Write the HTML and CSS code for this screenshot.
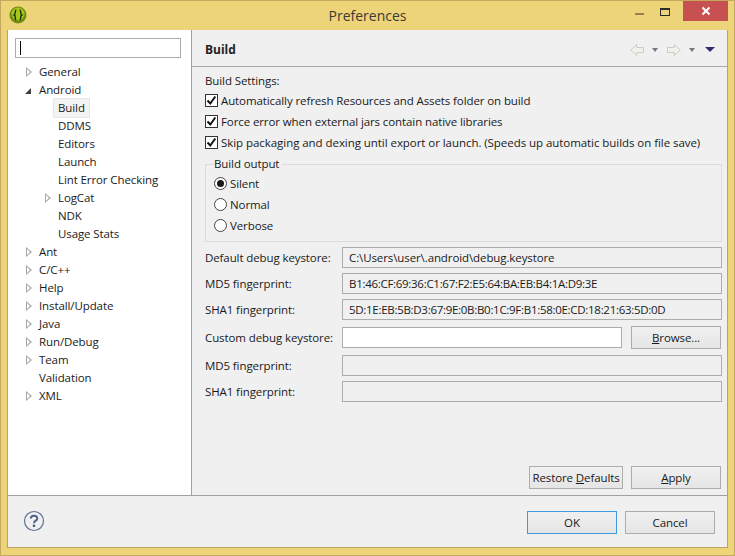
FILE: index.html
```html
<!DOCTYPE html>
<html lang="en">
<head>
<meta charset="utf-8">
<title>Preferences</title>
<link rel="stylesheet" href="styles.css">
</head>
<body>
<div class="window">
  <header class="titlebar">
    <svg class="app-icon" width="18" height="18" viewBox="0 0 18 18"><circle cx="9" cy="9" r="8.500" fill="#6f8c10"/><circle cx="9" cy="8" r="6.500" fill="#a6c81c"/><path d="M7.300 4C5.600 4 7 8.300 5.300 9 7 9.700 5.600 14 7.300 14M10.700 4C12.400 4 11 8.300 12.700 9 11 9.700 12.400 14 10.700 14" fill="none" stroke="#1d2a08" stroke-width="1.400"/></svg>
    <div class="title">Preferences</div>
    <div class="win-controls">
      <span class="win-btn"><i class="min-glyph"></i></span>
      <span class="win-btn"><i class="max-glyph"></i></span>
      <span class="win-close"><svg width="10" height="10" viewBox="0 0 10 10"><path d="M1.500 1.500l7 7M8.500 1.500l-7 7" stroke="#fff" stroke-width="2"/></svg></span>
    </div>
  </header>
  <div class="client">
    <div class="main">
      <aside class="sidebar">
        <div class="filter"><i class="caret"></i></div>
        <ul class="tree">
          <li class="node"><i class="tw"></i>General</li>
          <li class="node"><i class="tw open"></i>Android</li>
          <li class="node sub"><span class="selected">Build</span></li>
          <li class="node sub">DDMS</li>
          <li class="node sub">Editors</li>
          <li class="node sub">Launch</li>
          <li class="node sub">Lint Error Checking</li>
          <li class="node sub has"><i class="tw"></i>LogCat</li>
          <li class="node sub">NDK</li>
          <li class="node sub">Usage Stats</li>
          <li class="node"><i class="tw"></i>Ant</li>
          <li class="node"><i class="tw"></i>C/C++</li>
          <li class="node"><i class="tw"></i>Help</li>
          <li class="node"><i class="tw"></i>Install/Update</li>
          <li class="node"><i class="tw"></i>Java</li>
          <li class="node"><i class="tw"></i>Run/Debug</li>
          <li class="node"><i class="tw"></i>Team</li>
          <li class="node">Validation</li>
          <li class="node"><i class="tw"></i>XML</li>
        </ul>
      </aside>
      <section class="page">
        <div class="page-head">
          <h1 class="page-title">Build</h1>
          <div class="nav">
            <svg width="14" height="14" viewBox="0 0 14 14"><path d="M.7 7l6-5.500V4.500h6.800v5H6.700v3z" fill="#f1f1ea" stroke="#c9cdc4"/></svg>
            <i class="drop"></i>
            <svg class="nav-fwd" width="14" height="14" viewBox="0 0 14 14"><path d="M13.300 7l-6-5.500V4.500H.5v5h6.800v3z" fill="#f1f1ea" stroke="#c9cdc4"/></svg>
            <i class="drop"></i>
            <i class="drop menu"></i>
          </div>
        </div>
        <div class="page-body">
          <div class="section-label">Build Settings:</div>
          <label class="check"><i class="box"><svg width="11" height="11" viewBox="0 0 11 11"><path d="M1.500 5.500l2.800 3 5-7" fill="none" stroke="#111" stroke-width="2"/></svg></i>Automatically refresh Resources and Assets folder on build</label>
          <label class="check"><i class="box"><svg width="11" height="11" viewBox="0 0 11 11"><path d="M1.500 5.500l2.800 3 5-7" fill="none" stroke="#111" stroke-width="2"/></svg></i>Force error when external jars contain native libraries</label>
          <label class="check long"><i class="box"><svg width="11" height="11" viewBox="0 0 11 11"><path d="M1.500 5.500l2.800 3 5-7" fill="none" stroke="#111" stroke-width="2"/></svg></i>Skip packaging and dexing until export or launch. (Speeds up automatic builds on file save)</label>
          <fieldset class="group">
            <legend class="group-label">Build output</legend>
            <label class="radio"><i class="dot on"></i>Silent</label>
            <label class="radio"><i class="dot"></i>Normal</label>
            <label class="radio"><i class="dot"></i>Verbose</label>
          </fieldset>
          <div class="form">
            <div class="row"><span class="row-label">Default debug keystore:</span><div class="field">C:\Users\user\.android\debug.keystore</div></div>
            <div class="row"><span class="row-label">MD5 fingerprint:</span><div class="field hash">B1:46:CF:69:36:C1:67:F2:E5:64:BA:EB:B4:1A:D9:3E</div></div>
            <div class="row"><span class="row-label">SHA1 fingerprint:</span><div class="field hash">5D:1E:EB:5B:D3:67:9E:0B:B0:1C:9F:B1:58:0E:CD:18:21:63:5D:0D</div></div>
            <div class="row custom"><span class="row-label">Custom debug keystore:</span><div class="field input"></div><button class="btn browse"><u>B</u>rowse...</button></div>
            <div class="row"><span class="row-label">MD5 fingerprint:</span><div class="field"></div></div>
            <div class="row"><span class="row-label">SHA1 fingerprint:</span><div class="field"></div></div>
          </div>
          <div class="page-actions">
            <button class="btn restore">Restore <u>D</u>efaults</button>
            <button class="btn"><u>A</u>pply</button>
          </div>
        </div>
      </section>
    </div>
    <footer class="footer">
      <svg class="help" width="22" height="22" viewBox="0 0 22 22"><circle cx="11" cy="11" r="9.500" fill="none" stroke="#5f7391" stroke-width="1.200"/><path d="M7.800 8.600C7.800 4.800 14.300 4.800 14.300 8.400 14.300 10.800 11 10.600 11 13.200" fill="none" stroke="#4d628a" stroke-width="2"/><rect x="9.800" y="14.600" width="2.400" height="2.400" fill="#4d628a"/></svg>
      <div class="footer-actions">
        <button class="btn default">OK</button>
        <button class="btn">Cancel</button>
      </div>
    </footer>
  </div>
</div>
</body>
</html>
```
FILE: styles.css
```css
* { box-sizing: border-box; }
html, body { margin: 0; padding: 0; }
body {
  width: 735px;
  height: 556px;
  overflow: hidden;
  font-family: "Open Sans", "Noto Sans", sans-serif;
  font-size: 11.5px;
  letter-spacing: -0.1px;
  color: #1a1a1a;
}
.window {
  width: 735px;
  height: 556px;
  display: flex;
  flex-direction: column;
  background: #edd478;
  border: 1px solid #c4a95e;
}
.titlebar {
  height: 29px;
  flex: none;
  display: flex;
  align-items: flex-start;
  position: relative;
}
.app-icon { margin: 5px 0 0 8px; }
.title {
  position: absolute;
  left: 0;
  right: 0;
  top: 5px;
  text-align: center;
  font-family: "Open Sans", sans-serif;
  font-size: 14px;
  letter-spacing: 0;
  color: #3a3a36;
}
.win-controls { margin-left: auto; margin-right: 6px; display: flex; }
.win-btn { width: 26px; height: 20px; display: flex; align-items: center; justify-content: center; }
.min-glyph { width: 9px; height: 2px; background: #8f8057; margin-top: 6px; }
.max-glyph { width: 10px; height: 8px; border: 1px solid #2b2b2b; border-top-width: 2px; margin-top: 1px; }
.win-close {
  width: 45px;
  height: 20px;
  background: #c75050;
  display: flex;
  align-items: center;
  justify-content: center;
  margin-left: 5px;
}
.client {
  flex: 1;
  margin: 0 6px 7px 6px;
  background: #f0f0f0;
  display: flex;
  flex-direction: column;
  border: 1px solid #b9a667;
  border-width: 0 1px 1px 1px;
}
.main { flex: 1; display: flex; border-bottom: 1px solid #a0a0a0; min-height: 0; }
.sidebar {
  width: 184px;
  flex: none;
  background: #fff;
  border-right: 1px solid #a0a0a0;
  padding: 8px 0 0 7px;
}
.filter {
  width: 166px;
  height: 20px;
  border: 1px solid #ababab;
  background: #fff;
  padding: 2px 0 0 4px;
}
.caret { display: block; width: 1px; height: 14px; background: #000; }
.tree { list-style: none; margin: 5px 0 0; padding: 0; }
.node {
  height: 18px;
  line-height: 18px;
  padding-left: 24px;
  position: relative;
  white-space: nowrap;
}
.node.sub { padding-left: 43px; }
.selected {
  display: inline-block;
  background: #f3f3f3;
  outline: 1px solid #e6e6e6;
  margin-left: -4px;
  padding: 0 4px;
  height: 18px;
}
.tw {
  position: absolute;
  left: 11px;
  top: 4px;
  width: 0;
  height: 0;
  border-left: 6px solid #a8a8a8;
  border-top: 5px solid transparent;
  border-bottom: 5px solid transparent;
}
.tw::after {
  content: "";
  position: absolute;
  left: -5px;
  top: -3px;
  width: 0;
  height: 0;
  border-left: 3.500px solid #fff;
  border-top: 3px solid transparent;
  border-bottom: 3px solid transparent;
}
.has .tw { left: 30px; }
.tw.open {
  left: 10px;
  top: 7px;
  border-left: 6px solid transparent;
  border-top: 0;
  border-bottom: 6px solid #404040;
}
.tw.open::after { display: none; }
.page { flex: 1; display: flex; flex-direction: column; min-width: 0; }
.page-head {
  height: 37px;
  flex: none;
  border-bottom: 1px solid #a8a8a8;
  display: flex;
  align-items: center;
  justify-content: space-between;
  padding: 3px 12px 0 13px;
}
.page-title { margin: 0; font-size: 12px; font-weight: 700; letter-spacing: 0; color: #222; }
.nav { display: flex; align-items: center; }
.nav-fwd { margin-left: 9px; }
.drop {
  width: 0;
  height: 0;
  margin-left: 8px;
  border-left: 3.500px solid transparent;
  border-right: 3.500px solid transparent;
  border-top: 4px solid #777;
}
.drop.menu { margin-left: 10px; border-left-width: 5px; border-right-width: 5px; border-top: 5px solid #2f2f6e; }
.page-body { flex: 1; display: flex; flex-direction: column; padding: 5px 5px 6px 13px; }
.section-label { height: 18px; line-height: 18px; }
.check { height: 21px; display: flex; align-items: center; white-space: nowrap; }
.check.long { letter-spacing: -0.055px; }
.box {
  width: 13px;
  height: 13px;
  border: 1px solid #333;
  background: #fff;
  margin-right: 3px;
  display: flex;
  align-items: center;
  justify-content: center;
}
.group {
  margin: 3px 0 0;
  padding: 1px 0 0 8px;
  height: 86px;
  border: 1px solid #dcdcdc;
}
.group-label { padding: 0 3px 0 0; margin-left: 0; line-height: 16px; }
.radio { height: 21px; display: flex; align-items: center; }
.dot {
  width: 13px;
  height: 13px;
  border: 1px solid #444;
  border-radius: 50%;
  background: #fff;
  margin-right: 3px;
  position: relative;
}
.dot.on::after {
  content: "";
  position: absolute;
  left: 2px;
  top: 2px;
  width: 7px;
  height: 7px;
  border-radius: 50%;
  background: #1a1a1a;
}
.form { margin-top: 5px; display: flex; flex-direction: column; gap: 5px; }
.row { display: flex; align-items: center; height: 21px; }
.row.custom { margin: 2px 0; }
.row-label { width: 137px; flex: none; white-space: nowrap; }
.field {
  flex: 1;
  height: 21px;
  line-height: 19px;
  border: 1px solid #acacac;
  background: #f0f0f0;
  padding-left: 6px;
  white-space: nowrap;
}
.hash { letter-spacing: -0.29px; }
.input { flex: none; width: 280px; background: #fff; }
.btn {
  width: 90px;
  height: 23px;
  flex: none;
  padding: 0;
  border: 1px solid #acacac;
  background: linear-gradient(#f0f0f0, #e5e5e5);
  font: inherit;
  letter-spacing: inherit;
  color: inherit;
}
.browse { margin-left: 9px; }
.restore { width: 94px; }
.page-actions { margin-top: auto; display: flex; justify-content: flex-end; gap: 8px; padding-right: 1px; }
.footer {
  height: 51px;
  flex: none;
  display: flex;
  align-items: flex-start;
  justify-content: space-between;
  padding: 15px 12px 0 15px;
}
.help { margin-top: -1px; }
.footer-actions { display: flex; gap: 8px; }
.default { border-color: #3c9ae0; }
```
